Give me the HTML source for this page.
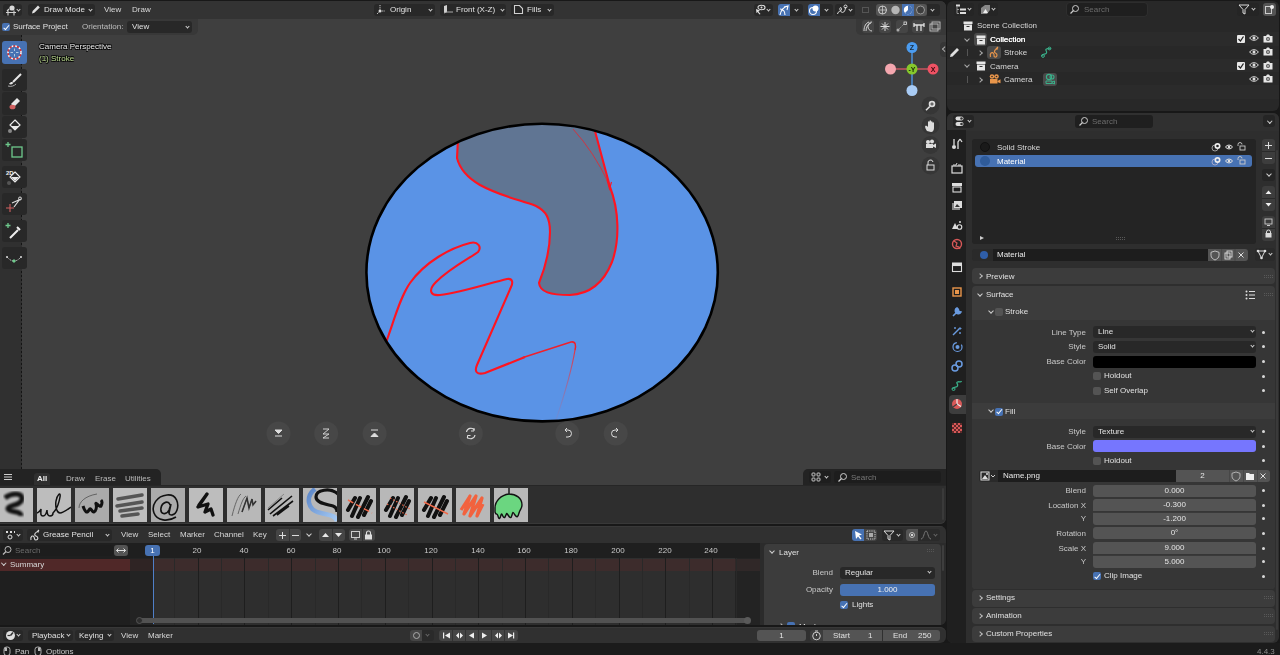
<!DOCTYPE html>
<html><head><meta charset="utf-8">
<style>
*{box-sizing:border-box;margin:0;padding:0}
html,body{width:1280px;height:655px;overflow:hidden;-webkit-font-smoothing:antialiased;background:#181818;font-family:"Liberation Sans",sans-serif;font-size:8px;color:#dcdcdc}
.a{position:absolute}
.t{position:absolute;white-space:nowrap;will-change:transform;line-height:10px;height:10px}
.dd{position:absolute;background:#282828;border-radius:3px}
.chev{position:absolute;width:4px;height:4px;border-right:1px solid #cfcfcf;border-bottom:1px solid #cfcfcf;transform:rotate(45deg)}
.chr{position:absolute;width:4px;height:4px;border-right:1px solid #bdbdbd;border-bottom:1px solid #bdbdbd;transform:rotate(-45deg)}
.tb{position:absolute;left:2px;width:25px;background:#282828;border-radius:3px}
.fld{position:absolute;will-change:transform;background:#545454;border-radius:3px;color:#e6e6e6;text-align:center;line-height:11px;height:11px}
.sel{position:absolute;will-change:transform;background:#282828;border-radius:3px;color:#e0e0e0;line-height:11px;height:11px;padding-left:5px}
.lbl{position:absolute;text-align:right;will-change:transform;white-space:nowrap;color:#c8c8c8;line-height:11px;height:11px}
.dot{position:absolute;width:3px;height:3px;border-radius:50%;background:#d8d8d8}
.cb{position:absolute;width:8px;height:8px;border-radius:2px;background:#545454}
.cbon{position:absolute;width:8px;height:8px;border-radius:2px;background:#4772b3}
.cbon:after{content:"";position:absolute;left:2.5px;top:0.5px;width:2px;height:4.5px;border-right:1.3px solid #fff;border-bottom:1.3px solid #fff;transform:rotate(40deg)}
.ph{position:absolute;background:#3c3c3c;border-radius:4px}
</style></head><body>

<!-- ================= VIEWPORT ================= -->
<div class="a" style="left:0;top:1px;width:946px;height:484px;background:#3f3f3f;border-radius:0 6px 0 0;overflow:hidden" id="vp">
  <!-- header -->
  <div class="a" style="left:0;top:0;width:946px;height:18px;background:#333333"></div>
  <!-- tool settings -->
  <div class="a" style="left:0;top:18px;width:198px;height:16px;background:#383838;border-radius:0 0 5px 0"></div>
  <div class="a" style="left:856px;top:18px;width:90px;height:16px;background:#383838;border-radius:0 0 0 5px"></div>
  <!-- toolbar -->
  <div class="a" style="left:0;top:34px;width:22px;height:434px;background:#303030"></div>
  <div class="a" style="left:21px;top:34px;width:1px;height:434px;background:repeating-linear-gradient(#141414 0 2px,transparent 2px 4px)"></div>

  <!-- header buttons -->
  <div class="dd" style="left:3px;top:3px;width:19px;height:12px"></div>
  <svg class="a" style="left:5px;top:3px" width="12" height="12" viewBox="0 0 12 12"><circle cx="7" cy="4" r="2.6" fill="#d8d8d8"/><path d="M1 8.5h10M3 6.5v5M9 6.5v5M2 7l2-2" stroke="#d0d0d0" stroke-width="1.1" fill="none"/></svg>
  <div class="chev" style="left:16.5px;top:7px;width:3px;height:3px"></div>
  <div class="dd" style="left:28px;top:3px;width:67px;height:12px"></div>
  <svg class="a" style="left:30px;top:3px" width="11" height="11" viewBox="0 0 11 11"><path d="M2 9.5 L2.6 7 L8 1.6 L9.8 3.4 L4.4 8.8 Z" fill="#e0e0e0"/></svg>
  <div class="t" style="left:44px;top:4px;color:#e2e2e2">Draw Mode</div>
  <div class="chev" style="left:89px;top:7px;width:3px;height:3px"></div>
  <div class="t" style="left:104px;top:4px;color:#d8d8d8">View</div>
  <div class="t" style="left:132px;top:4px;color:#d8d8d8">Draw</div>

  <div class="dd" style="left:374px;top:3px;width:61px;height:12px"></div>
  <svg class="a" style="left:376px;top:3px" width="11" height="11" viewBox="0 0 11 11"><path d="M4 1v6M1 10l3-3M4 7h5" stroke="#cfcfcf" stroke-width="1" fill="none" stroke-dasharray="1.2 1"/><circle cx="4" cy="7" r="1.5" fill="#e0e0e0"/></svg>
  <div class="t" style="left:390px;top:4px;color:#e2e2e2">Origin</div>
  <div class="chev" style="left:429px;top:7px;width:3px;height:3px"></div>
  <div class="dd" style="left:440px;top:3px;width:66px;height:12px"></div>
  <svg class="a" style="left:442px;top:3px" width="12" height="11" viewBox="0 0 12 11"><path d="M2 2l3-1v7l-3 1z" fill="#cfcfcf"/><path d="M5 8h6M2 9l3-1" stroke="#aaa" stroke-width="1"/></svg>
  <div class="t" style="left:456px;top:4px;color:#e2e2e2">Front (X-Z)</div>
  <div class="chev" style="left:501px;top:7px;width:3px;height:3px"></div>
  <div class="dd" style="left:511px;top:3px;width:43px;height:12px"></div>
  <svg class="a" style="left:513px;top:3px" width="11" height="11" viewBox="0 0 11 11"><path d="M1.5 1.5h5l3 3v5h-8z" fill="none" stroke="#d0d0d0" stroke-width="1.1"/></svg>
  <div class="t" style="left:527px;top:4px;color:#e2e2e2">Fills</div>
  <div class="chev" style="left:548px;top:7px;width:3px;height:3px"></div>

  <div class="dd" style="left:754px;top:3px;width:19px;height:12px"></div>
  <svg class="a" style="left:755px;top:3px" width="11" height="11" viewBox="0 0 11 11"><ellipse cx="6.5" cy="3.5" rx="3.5" ry="2.2" fill="none" stroke="#ddd" stroke-width="1.1"/><circle cx="6.5" cy="3.5" r="1" fill="#ddd"/><path d="M1 5l4 1.5-1.5 1 2 2.5-1 .5-2-2.5-1 1.2z" fill="#ddd"/></svg>
  <div class="chev" style="left:767px;top:7px;width:3px;height:3px"></div>
  <div class="a" style="left:778px;top:3px;width:12px;height:12px;background:#4772b3;border-radius:3px 0 0 3px"></div>
  <svg class="a" style="left:778px;top:3px" width="12" height="12" viewBox="0 0 12 12"><path d="M2 11C3 6 5 3 10 2M6 3l4-1-1 4M2 5c3 0 5 2 5 6" stroke="#fff" stroke-width="1.1" fill="none"/></svg>
  <div class="dd" style="left:790px;top:3px;width:13px;height:12px;border-radius:0 3px 3px 0"></div>
  <div class="chev" style="left:795px;top:7px;width:3px;height:3px"></div>
  <div class="a" style="left:808px;top:3px;width:12px;height:12px;background:#4772b3;border-radius:3px 0 0 3px"></div>
  <svg class="a" style="left:808px;top:3px" width="12" height="12" viewBox="0 0 12 12"><circle cx="5" cy="7" r="3.5" fill="none" stroke="#fff" stroke-width="1.1"/><circle cx="7.5" cy="4.5" r="3" fill="#fff"/></svg>
  <div class="dd" style="left:820px;top:3px;width:13px;height:12px;border-radius:0 3px 3px 0"></div>
  <div class="chev" style="left:825px;top:7px;width:3px;height:3px"></div>
  <div class="dd" style="left:835px;top:3px;width:20px;height:12px"></div>
  <svg class="a" style="left:836px;top:3px" width="12" height="12" viewBox="0 0 12 12"><path d="M1.5 10c0-3 4-2 4-5s-3-1-1 2 5 1 5-4" stroke="#ddd" stroke-width="1" fill="none"/><circle cx="9.5" cy="2.5" r="1.5" fill="none" stroke="#ddd"/></svg>
  <div class="chev" style="left:849px;top:7px;width:3px;height:3px"></div>
  <div class="a" style="left:859px;top:3px;width:13px;height:12px;background:#333;border-radius:3px"></div>
  <div class="a" style="left:862px;top:6px;width:7px;height:6px;border:1px solid #555"></div>
  <div class="a" style="left:876px;top:3px;width:51px;height:12px;background:#545454;border-radius:3px"></div>
  <div class="a" style="left:902px;top:3px;width:12px;height:12px;background:#4772b3"></div>
  <div class="dd" style="left:927px;top:3px;width:13px;height:12px;border-radius:0 3px 3px 0"></div>
  <div class="chev" style="left:931px;top:7px;width:3px;height:3px"></div>
  <svg class="a" style="left:876px;top:3px" width="51" height="12" viewBox="0 0 51 12">
    <circle cx="6.5" cy="6" r="4" fill="none" stroke="#ccc" stroke-width="1"/><path d="M2.5 6h8M6.5 2v8" stroke="#ccc" stroke-width=".8"/>
    <circle cx="19.5" cy="6" r="4.2" fill="#b5b5b5"/>
    <circle cx="32" cy="6" r="4.2" fill="#fff"/><path d="M32 6V1.8A4.2 4.2 0 0 1 36.2 6z" fill="#4772b3"/><path d="M32 6h4.2A4.2 4.2 0 0 1 29 9z" fill="#4772b3"/>
    <circle cx="44.5" cy="6" r="4" fill="#3e3e3e" stroke="#999" stroke-width="1"/>
  </svg>

  <!-- tool settings row -->
  <div class="cbon" style="left:2px;top:22px"></div>
  <div class="t" style="left:13px;top:21px;color:#e0e0e0">Surface Project</div>
  <div class="t" style="left:82px;top:21px;color:#bdbdbd">Orientation:</div>
  <div class="dd" style="left:127px;top:20px;width:65px;height:12px"></div>
  <div class="t" style="left:132px;top:21px;color:#e0e0e0">View</div>
  <div class="chev" style="left:186px;top:24px;width:3px;height:3px"></div>

  <!-- right second row icons -->
  <div class="a" style="left:862px;top:19px;width:12px;height:13px;background:#454545;border-radius:3px"></div>
  <div class="a" style="left:879px;top:19px;width:12px;height:13px;background:#454545;border-radius:3px"></div>
  <div class="a" style="left:896px;top:19px;width:12px;height:13px;background:#454545;border-radius:3px"></div>
  <div class="a" style="left:912px;top:19px;width:12px;height:13px;background:#454545;border-radius:3px"></div>
  <div class="a" style="left:929px;top:19px;width:12px;height:13px;background:#454545;border-radius:3px"></div>
  <svg class="a" style="left:862px;top:19px" width="80" height="13" viewBox="0 0 80 13">
    <path d="M2 11C2 6 4 3 7 2M4 11C4 7 6 4 9 3M10 2a4 4.5 0 0 0 0 9" stroke="#d5d5d5" stroke-width="1" fill="none"/>
    <path d="M23 2v9M18.5 6.5h9M20 3.5l6 6M26 3.5l-6 6" stroke="#ddd" stroke-width="1"/>
    <circle cx="36" cy="10" r="1.5" fill="#aaa"/><path d="M37 9l5-5" stroke="#aaa" stroke-dasharray="1 1"/><rect x="42" y="2" width="2.5" height="2.5" fill="none" stroke="#ddd" stroke-width=".8"/>
    <path d="M52 3v4M62 3v4M52 5h10M55 5v6M59 5v6" stroke="#ddd" stroke-width="1.3"/>
    <rect x="68" y="4" width="8" height="7" fill="none" stroke="#ccc" stroke-width=".8"/><rect x="70" y="2" width="8" height="7" fill="none" stroke="#ccc" stroke-width=".8"/>
  </svg>

  <!-- toolbar -->
  <div class="tb" style="top:40px;height:23px;background:#4772b3"></div>
  <svg class="a" style="left:6px;top:43px" width="17" height="17" viewBox="0 0 17 17"><circle cx="8.5" cy="8.5" r="6.5" fill="none" stroke="#fff" stroke-width="1.5" stroke-dasharray="2.2 1.6"/><circle cx="8.5" cy="8.5" r="6.5" fill="none" stroke="#d33" stroke-width="1.5" stroke-dasharray="2.2 1.6" stroke-dashoffset="1.9"/><path d="M8.5 4.5v2.5M8.5 10v2.5M4.5 8.5h2.5M10 8.5h2.5" stroke="#cde" stroke-width=".8"/></svg>
  <div class="tb" style="top:68px;height:22px"></div>
  <svg class="a" style="left:6px;top:71px" width="17" height="17" viewBox="0 0 17 17"><path d="M15 2L7 10" stroke="#e8e8e8" stroke-width="2"/><path d="M3 12c2-3 4-2 4-1s-2 2-4 1z" fill="#e8e8e8"/><path d="M2 14c3 1 6 0 8-2" stroke="#aaa" fill="none"/></svg>
  <div class="tb" style="top:91px;height:23px"></div>
  <svg class="a" style="left:6px;top:94px" width="17" height="17" viewBox="0 0 17 17"><path d="M5 9l6-6 3 3-6 6z" fill="#e8e8e8"/><ellipse cx="6.5" cy="12" rx="3" ry="2.3" fill="#d06060"/></svg>
  <div class="tb" style="top:115px;height:22px"></div>
  <svg class="a" style="left:6px;top:117px" width="17" height="17" viewBox="0 0 17 17"><path d="M9 2l5 5-5 5-5-5z" fill="none" stroke="#e8e8e8" stroke-width="1.2"/><path d="M5 8h8l-4 4z" fill="#e8e8e8"/><circle cx="4" cy="13" r="2" fill="#888"/></svg>
  <div class="tb" style="top:138px;height:22px"></div>
  <svg class="a" style="left:5px;top:140px" width="20" height="19" viewBox="0 0 20 19"><path d="M3 1v5M0.5 3.5h5" stroke="#6ec98c" stroke-width="1.3"/><rect x="7" y="6" width="10" height="10" fill="none" stroke="#6ec98c" stroke-width="1.3"/></svg>
  <div class="tb" style="top:165px;height:22px"></div>
  <svg class="a" style="left:5px;top:167px" width="18" height="18" viewBox="0 0 18 18"><text x="1" y="7" font-size="6" font-weight="bold" fill="#eee" font-family="Liberation Sans">2D</text><path d="M10 4l5 5-5 5-5-5z" fill="none" stroke="#e8e8e8" stroke-width="1.1"/><path d="M6 9h8l-4 4z" fill="#e8e8e8"/><circle cx="4" cy="15" r="2" fill="#555"/></svg>
  <div class="tb" style="top:192px;height:22px"></div>
  <svg class="a" style="left:5px;top:194px" width="18" height="18" viewBox="0 0 18 18"><path d="M7 8l9-4M9 12l6-8" stroke="#ddd" stroke-width="1.2"/><circle cx="15" cy="3.5" r="1.5" fill="none" stroke="#ddd"/><path d="M5 9v8M1 13h8" stroke="#d06060" stroke-width="1.1"/></svg>
  <div class="tb" style="top:219px;height:22px"></div>
  <svg class="a" style="left:5px;top:221px" width="18" height="18" viewBox="0 0 18 18"><path d="M3 1v5M0.5 3.5h5" stroke="#6ec98c" stroke-width="1.3"/><path d="M5 16l8-8M12 5l3 3" stroke="#eee" stroke-width="2"/></svg>
  <div class="tb" style="top:246px;height:22px"></div>
  <svg class="a" style="left:5px;top:248px" width="18" height="18" viewBox="0 0 18 18"><path d="M2 8q7 8 14 0" stroke="#ddd" stroke-width=".9" fill="none" stroke-dasharray="1.2 .8"/><circle cx="2" cy="8" r="1" fill="#ddd"/><circle cx="16" cy="8" r="1" fill="#ddd"/><path d="M9 10l2 2-2 2-2-2z" fill="#6ec98c"/></svg>

  <!-- overlay text -->
  <div class="t" style="left:39px;top:41px;color:#e8e8e8;text-shadow:0.7px 0.7px 0 #000,-0.7px -0.7px 0 #000,0.7px -0.7px 0 #000,-0.7px 0.7px 0 #000">Camera Perspective</div>
  <div class="t" style="left:39px;top:53px;color:#b7d789;text-shadow:0.7px 0.7px 0 #000,-0.7px -0.7px 0 #000,0.7px -0.7px 0 #000,-0.7px 0.7px 0 #000">(1) Stroke</div>

  <!-- drawing -->
  <svg class="a" style="left:0;top:-1px" width="946" height="469" viewBox="0 0 946 469">
    <defs><linearGradient id="tg" gradientUnits="userSpaceOnUse" x1="0" y1="348" x2="0" y2="418"><stop offset="0" stop-color="#e8303a"/><stop offset="1" stop-color="#8a7fb8" stop-opacity=".3"/></linearGradient><clipPath id="ec"><ellipse cx="542.1" cy="272.6" rx="175.7" ry="148.8"/></clipPath></defs>
    <ellipse cx="542.1" cy="272.6" rx="175.7" ry="148.8" fill="#5a93e6"/>
    <g clip-path="url(#ec)">
      <path d="M459 120 L457 158 C460 170 468 178 480 185 C500 196 520 200 536 206 C546 211 550 218 550 232 C550 250 545 268 539 283 C540 292 550 295 570 295 C590 294 604 282 612 262 C620 240 619 210 610 187 L592 120 Z" fill="#607593"/>
      <path d="M459 120 L457 158 C460 170 468 178 480 185 C500 196 520 200 536 206 C546 211 550 218 550 232 C550 250 545 268 539 283 C540 292 550 295 570 295 C590 294 604 282 612 262 C620 240 619 210 610 187 L592 120" fill="none" stroke="#ff1420" stroke-width="2.1"/>
      <path d="M573 129 Q594 152 609 184" stroke="#e8262e" stroke-width=".8" fill="none"/><path d="M607 180 L609.5 189 L611.5 182" stroke="#ff1420" stroke-width="1.1" fill="none"/>
      <path d="M380 358 C392 330 398 300 410 283 C425 262 450 248 470 243 C478 241 482 247 478 252 C470 258 450 268 436 282 C428 290 430 296 440 295 C460 293 490 283 507 279 C513 278 513 283 511 287 L477 365 C474 372 477 375 485 373 L525 357" fill="none" stroke="#ff1420" stroke-width="2.1"/>
      <path d="M523 357.5 L571 342 C576 341 576 346 575 350" fill="none" stroke="#f0202a" stroke-width="1.5"/>
      <path d="M575 350 C572 368 566 390 556 420" fill="none" stroke="url(#tg)" stroke-width="1.2"/>
    </g>
    <ellipse cx="542.1" cy="272.6" rx="175.7" ry="148.8" fill="none" stroke="#000" stroke-width="2.6"/>
  </svg>

  <div class="a" style="left:940px;top:41px;width:8px;height:15px;background:#363636;border-radius:4px 0 0 4px"></div>
  <div class="a" style="left:943px;top:46px;width:3.5px;height:3.5px;border-left:1px solid #aaa;border-bottom:1px solid #aaa;transform:rotate(45deg)"></div>
  <!-- gizmo -->
  <svg class="a" style="left:880px;top:34px" width="64" height="64" viewBox="880 35 64 64">
    <path d="M890 69H934" stroke="#c9565f" stroke-width="1.5"/>
    <path d="M912 47V91" stroke="#4b90d8" stroke-width="1.5"/>
    <circle cx="890.5" cy="69" r="5.5" fill="#f4a7af"/>
    <circle cx="912" cy="90.5" r="5.5" fill="#a9ccf5"/>
    <circle cx="912" cy="47.5" r="5.5" fill="#4b9cf0"/>
    <circle cx="933" cy="69" r="5.5" fill="#f05264"/>
    <circle cx="912" cy="69" r="5.5" fill="#86c92b"/>
    <text x="912" y="50.3" font-size="7" text-anchor="middle" fill="#1a2a3a" font-family="Liberation Sans" font-weight="bold">Z</text>
    <text x="933" y="71.8" font-size="7" text-anchor="middle" fill="#3a0a10" font-family="Liberation Sans" font-weight="bold">X</text>
    <text x="912" y="71.8" font-size="7" text-anchor="middle" fill="#1a2a0a" font-family="Liberation Sans" font-weight="bold">-Y</text>
  </svg>
  <!-- nav buttons -->
  <svg class="a" style="left:920px;top:94px" width="22" height="84" viewBox="920 95 22 84">
    <circle cx="930.5" cy="105.5" r="9" fill="#363636"/>
    <circle cx="930.5" cy="125.5" r="9" fill="#363636"/>
    <circle cx="930.5" cy="145" r="9" fill="#363636"/>
    <circle cx="930.5" cy="165.5" r="9" fill="#363636"/>
    <circle cx="932" cy="104" r="3.3" fill="#ddd"/><path d="M932 102.3v3.4M930.3 104h3.4" stroke="#363636" stroke-width=".9"/><path d="M929.8 106.5l-3.8 3.8" stroke="#ddd" stroke-width="1.6"/>
    <path d="M927 131c-2-3-3-6 0-5l1 1v-5c0-1 1.5-1 1.5 0v3-4c0-1 1.5-1 1.5 0v4-3c0-1 1.5-1 1.5 0v3-2c0-1 1.5-1 1.5 0v5c0 2-1 4-3 4z" fill="#ddd"/>
    <circle cx="928" cy="142" r="2" fill="#ddd"/><circle cx="932" cy="141.5" r="2" fill="#ddd"/><rect x="926" y="144" width="7" height="4" fill="#ddd"/><path d="M933 145l3-1.5v4.5l-3-1.5z" fill="#ddd"/>
    <rect x="927" y="165" width="7" height="5" fill="none" stroke="#ddd" stroke-width="1"/><path d="M928 165v-2a2.5 2.5 0 0 1 5 -1" stroke="#ddd" fill="none"/>
  </svg>
  <!-- bottom floating buttons -->
  <svg class="a" style="left:260px;top:419px" width="380" height="30" viewBox="260 420 380 30">
    <g fill="#474747"><circle cx="278.5" cy="433.4" r="12"/><circle cx="326.2" cy="433.4" r="12"/><circle cx="374.6" cy="433.4" r="12"/><circle cx="470.8" cy="433.4" r="12"/><circle cx="567.3" cy="433.4" r="12"/><circle cx="615.7" cy="433.4" r="12"/></g>
    <path d="M275 430h7l-3.5 3.5z M275 436h7" stroke="#ddd" fill="#ddd" stroke-width="1"/>
    <path d="M323 429h6l-6 5 6 0-6 4h6" stroke="#ddd" fill="none" stroke-width=".9"/>
    <path d="M371 430h7M374.5 433l3.5 3.5h-7z" stroke="#ddd" fill="#ddd" stroke-width="1"/>
    <path d="M466.5 432a4.5 4.5 0 0 1 8 -2M475 435a4.5 4.5 0 0 1 -8 2" stroke="#ddd" fill="none" stroke-width="1.1"/><path d="M474 428v3h-3M467.5 438.5v-3h3" stroke="#ddd" fill="none"/>
    <path d="M565 430h3a3.5 3.5 0 0 1 0 7h-2M565 430l2-2M565 430l2 2" stroke="#ddd" fill="none" stroke-width="1"/>
    <path d="M618 430h-3a3.5 3.5 0 0 0 0 7h2M618 430l-2-2M618 430l-2 2" stroke="#ddd" fill="none" stroke-width="1"/>
  </svg>
</div>


<!-- ================= ASSET SHELF ================= -->
<div class="a" style="left:0;top:469px;width:161px;height:16px;background:#232323;border-radius:0 5px 0 0"></div>
<div class="a" style="left:4px;top:474px;width:8px;height:1px;background:#cfcfcf;box-shadow:0 2.5px 0 #cfcfcf,0 5px 0 #cfcfcf"></div>
<div class="a" style="left:34px;top:473px;width:16px;height:12px;background:#2f2f2f;border-radius:3px 3px 0 0"></div>
<div class="t" style="left:37px;top:474px;color:#f0f0f0;font-weight:bold">All</div>
<div class="t" style="left:66px;top:474px;color:#bbb">Draw</div>
<div class="t" style="left:95px;top:474px;color:#bbb">Erase</div>
<div class="t" style="left:125px;top:474px;color:#bbb">Utilities</div>
<div class="a" style="left:803px;top:469px;width:143px;height:16px;background:#232323;border-radius:5px 0 0 0"></div>
<div class="dd" style="left:809px;top:471px;width:22px;height:12px;background:#1e1e1e"></div>
<svg class="a" style="left:811px;top:472px" width="11" height="10" viewBox="0 0 11 10"><g fill="none" stroke="#ddd" stroke-width=".9"><rect x="1" y="1" width="3" height="3" rx=".8"/><rect x="6" y="1" width="3" height="3" rx=".8"/><rect x="1" y="6" width="3" height="3" rx=".8"/><rect x="6" y="6" width="3" height="3" rx=".8"/></g></svg>
<div class="chev" style="left:825px;top:475px;width:3px;height:3px"></div>
<div class="dd" style="left:834px;top:471px;width:107px;height:12px;background:#1d1d1d"></div>
<svg class="a" style="left:837px;top:472px" width="11" height="11" viewBox="0 0 11 11"><circle cx="6.5" cy="4.5" r="3" fill="none" stroke="#ccc" stroke-width="1"/><path d="M4.5 6.5L1.5 9.5" stroke="#ccc" stroke-width="1.2"/></svg>
<div class="t" style="left:851px;top:473px;color:#777">Search</div>
<div class="a" style="left:0;top:485px;width:946px;height:38.5px;background:#2e2e2e;border-top:1px solid #262626;border-radius:0 0 6px 0;box-shadow:inset 0 -1px 0 #383838"></div>
<div class="a" style="left:942px;top:488px;width:2px;height:32px;background:#3a3a3a;border-radius:1px"></div>
<svg width="0" height="0" style="position:absolute"><defs><filter id="bl"><feGaussianBlur stdDeviation="1.1"/></filter></defs></svg>
<svg class="a" style="left:-1px;top:488px" width="34" height="34" viewBox="0 0 34 34"><rect width="34" height="34" fill="#bdbdbd"/><path d="M6 10c6-5 18-6 17 1s-15 6-14 10 13 1 13 7" stroke="#000" stroke-width="5" fill="none" opacity=".9" filter="url(#bl)"/></svg>
<svg class="a" style="left:37px;top:488px" width="34" height="34" viewBox="0 0 34 34"><rect width="34" height="34" fill="#bdbdbd"/><path d="M0 25c3-1 3-2 4-4 0 4-1 7 2 7s4-6 4-6c0 3 0 6 3 6s3-3 3-3c3-3 6-10 7-16s-3-2-4 4 1 12 4 12 8-4 11-6" stroke="#111" stroke-width="1.5" fill="none"/></svg>
<svg class="a" style="left:75px;top:488px" width="34" height="34" viewBox="0 0 34 34"><rect width="34" height="34" fill="#ababab"/><path d="M4 20c0-6 6-12 18-14" stroke="#333" stroke-width=".6" fill="none"/><path d="M8 18c2 6 4 8 6 4s3 3 5 2 3-5 2-8 4 4 5 2 2-4 0-6" stroke="#111" stroke-width="3" fill="none"/></svg>
<svg class="a" style="left:113px;top:488px" width="34" height="34" viewBox="0 0 34 34"><rect width="34" height="34" fill="#bdbdbd"/><path d="M5 11l24-4M4 18l25-4M7 23l22-3M9 28l16-2" stroke="#555" stroke-width="3.5" stroke-linecap="round" fill="none"/></svg>
<svg class="a" style="left:151px;top:488px" width="34" height="34" viewBox="0 0 34 34"><rect width="34" height="34" fill="#ababab"/><path d="M19 17c-1-5-8-3-9 3s5 8 8 2l2-6-2 9c0 3 6 3 8-3s0-16-10-15-16 10-13 18 14 9 22 4" stroke="#111" stroke-width="1.6" fill="none"/></svg>
<svg class="a" style="left:189px;top:488px" width="34" height="34" viewBox="0 0 34 34"><rect width="34" height="34" fill="#bdbdbd"/><path d="M10 17l8-11-9 13 10-3-3 8 6-3 2 6" stroke="#111" stroke-width="3.3" stroke-linejoin="round" stroke-linecap="round" fill="none"/></svg>
<svg class="a" style="left:227px;top:488px" width="34" height="34" viewBox="0 0 34 34"><rect width="34" height="34" fill="#b8b8b8"/><path d="M5 28c3-12 6-20 9-22M11 26c3-10 5-16 8-18M15 24l5-14 2 10 3-9 1 6 3-4" stroke="#666" stroke-width="1" fill="none"/><path d="M15 24l5-14 2 10 3-9 1 6 3-4" stroke="#333" stroke-width="1.5" fill="none"/></svg>
<svg class="a" style="left:265px;top:488px" width="34" height="34" viewBox="0 0 34 34"><rect width="34" height="34" fill="#b8b8b8"/><path d="M3 22l14-12M5 26l22-18M8 28l20-15M12 27l12-9" stroke="#111" stroke-width="1.6" fill="none"/><path d="M3 20l16-14" stroke="#888" stroke-width="1" fill="none"/></svg>
<svg class="a" style="left:303px;top:488px" width="34" height="34" viewBox="0 0 34 34"><rect width="34" height="34" fill="#b8b8b8"/><defs><linearGradient id="bg9" x1="0" y1="0" x2="1" y2="1"><stop offset="0" stop-color="#5b86c8"/><stop offset="1" stop-color="#a8ccf5"/></linearGradient></defs><path d="M12 1C3 8 3 22 18 25c8 2 14 2 16 8" stroke="url(#bg9)" stroke-width="4.5" fill="none"/><path d="M35 6C27-1 13 2 13 9c0 6 10 7 17 9 3 1 4 3 4 6" stroke="#111" stroke-width="3.2" fill="none"/></svg>
<svg class="a" style="left:342px;top:488px" width="34" height="34" viewBox="0 0 34 34"><rect width="34" height="34" fill="#b8b8b8"/><path d="M10 28l8-18M16 29l10-20M22 27l7-14M6 22l7-12" stroke="#111" stroke-width="4" stroke-linecap="round"/><path d="M6 12l24 13" stroke="#f06a4a" stroke-width="1.5" stroke-dasharray="6 3"/></svg>
<svg class="a" style="left:380px;top:488px" width="34" height="34" viewBox="0 0 34 34"><rect width="34" height="34" fill="#b8b8b8"/><path d="M10 28l8-18M16 29l10-20M22 27l7-14M6 22l7-12" stroke="#111" stroke-width="4" stroke-linecap="round"/><path d="M7 16l20 11M10 10l20 11" stroke="#f06a4a" stroke-width="1.2" stroke-dasharray="1.5 2"/></svg>
<svg class="a" style="left:418px;top:488px" width="34" height="34" viewBox="0 0 34 34"><rect width="34" height="34" fill="#b8b8b8"/><path d="M10 28l8-18M16 29l10-20M22 27l7-14M6 22l7-12" stroke="#111" stroke-width="4" stroke-linecap="round"/><path d="M6 14l24 12" stroke="#f06a4a" stroke-width="1.5"/></svg>
<svg class="a" style="left:456px;top:488px" width="34" height="34" viewBox="0 0 34 34"><rect width="34" height="34" fill="#b8b8b8"/><path d="M5 22l9-14-6 18 12-18-6 20 12-18-5 18 6-12" stroke="#f2623e" stroke-width="3.2" stroke-linejoin="round" fill="none"/></svg>
<svg class="a" style="left:494px;top:488px" width="34" height="34" viewBox="0 0 34 34"><rect width="34" height="34" fill="#b8b8b8"/><path d="M15 0v6c-8 1-14 7-14 14v4c1 4 2 0 3 4s2 3 3-1 2 5 4 2 1-5 3-2 3 4 4 0 1-3 3 0 3 2 4-2 3-4 3-8c0-7-6-11-13-11V0" fill="#6bd680" stroke="#111" stroke-width="1.4"/></svg>

<!-- ================= DOPESHEET ================= -->
<div class="a" style="left:0;top:526px;width:946px;height:99px;background:#2b2b2b;border-radius:0 6px 6px 0;overflow:hidden">
  <div class="a" style="left:0;top:0;width:946px;height:17px;background:#303030;box-shadow:inset 0 1px 0 #383838"></div>
  <div class="a" style="left:0;top:17px;width:130px;height:83px;background:#1f1f1f"></div>
  <div class="a" style="left:130px;top:17px;width:630px;height:15px;background:#1f1f1f"></div>
  <div class="a" style="left:130px;top:32px;width:630px;height:68px;background:#2e2e2e"></div>
  <div class="a" style="left:130px;top:32px;width:23px;height:68px;background:#232323"></div>
  <div class="a" style="left:735px;top:32px;width:25px;height:68px;background:#232323"></div>
  <div class="a" style="left:0;top:33px;width:130px;height:12px;background:#502828"></div>
  <div class="a" style="left:130px;top:33px;width:605px;height:12px;background:#3d2c2c"></div>
  <div class="a" style="left:130px;top:33px;width:23px;height:12px;background:#2f2424"></div>
  <div class="a" style="left:735px;top:33px;width:25px;height:12px;background:#302828"></div>
  <div class="a" style="left:174px;top:32px;width:1px;height:68px;background:#292929"></div>
  <div class="a" style="left:198px;top:32px;width:1px;height:68px;background:#1e1e1e"></div>
  <div class="a" style="left:221px;top:32px;width:1px;height:68px;background:#292929"></div>
  <div class="a" style="left:244px;top:32px;width:1px;height:68px;background:#1e1e1e"></div>
  <div class="a" style="left:268px;top:32px;width:1px;height:68px;background:#292929"></div>
  <div class="a" style="left:291px;top:32px;width:1px;height:68px;background:#1e1e1e"></div>
  <div class="a" style="left:315px;top:32px;width:1px;height:68px;background:#292929"></div>
  <div class="a" style="left:338px;top:32px;width:1px;height:68px;background:#1e1e1e"></div>
  <div class="a" style="left:361px;top:32px;width:1px;height:68px;background:#292929"></div>
  <div class="a" style="left:385px;top:32px;width:1px;height:68px;background:#1e1e1e"></div>
  <div class="a" style="left:408px;top:32px;width:1px;height:68px;background:#292929"></div>
  <div class="a" style="left:432px;top:32px;width:1px;height:68px;background:#1e1e1e"></div>
  <div class="a" style="left:455px;top:32px;width:1px;height:68px;background:#292929"></div>
  <div class="a" style="left:478px;top:32px;width:1px;height:68px;background:#1e1e1e"></div>
  <div class="a" style="left:502px;top:32px;width:1px;height:68px;background:#292929"></div>
  <div class="a" style="left:525px;top:32px;width:1px;height:68px;background:#1e1e1e"></div>
  <div class="a" style="left:548px;top:32px;width:1px;height:68px;background:#292929"></div>
  <div class="a" style="left:572px;top:32px;width:1px;height:68px;background:#1e1e1e"></div>
  <div class="a" style="left:595px;top:32px;width:1px;height:68px;background:#292929"></div>
  <div class="a" style="left:619px;top:32px;width:1px;height:68px;background:#1e1e1e"></div>
  <div class="a" style="left:642px;top:32px;width:1px;height:68px;background:#292929"></div>
  <div class="a" style="left:665px;top:32px;width:1px;height:68px;background:#1e1e1e"></div>
  <div class="a" style="left:689px;top:32px;width:1px;height:68px;background:#292929"></div>
  <div class="a" style="left:712px;top:32px;width:1px;height:68px;background:#1e1e1e"></div>
  <div class="a" style="left:736px;top:32px;width:1px;height:68px;background:#292929"></div>
  <div class="t" style="left:182.2px;top:20px;width:30px;text-align:center;color:#c8c8c8">20</div>
  <div class="t" style="left:228.9px;top:20px;width:30px;text-align:center;color:#c8c8c8">40</div>
  <div class="t" style="left:275.7px;top:20px;width:30px;text-align:center;color:#c8c8c8">60</div>
  <div class="t" style="left:322.4px;top:20px;width:30px;text-align:center;color:#c8c8c8">80</div>
  <div class="t" style="left:369.2px;top:20px;width:30px;text-align:center;color:#c8c8c8">100</div>
  <div class="t" style="left:415.9px;top:20px;width:30px;text-align:center;color:#c8c8c8">120</div>
  <div class="t" style="left:462.7px;top:20px;width:30px;text-align:center;color:#c8c8c8">140</div>
  <div class="t" style="left:509.4px;top:20px;width:30px;text-align:center;color:#c8c8c8">160</div>
  <div class="t" style="left:556.2px;top:20px;width:30px;text-align:center;color:#c8c8c8">180</div>
  <div class="t" style="left:602.9px;top:20px;width:30px;text-align:center;color:#c8c8c8">200</div>
  <div class="t" style="left:649.7px;top:20px;width:30px;text-align:center;color:#c8c8c8">220</div>
  <div class="t" style="left:696.4px;top:20px;width:30px;text-align:center;color:#c8c8c8">240</div>
  <div class="a" style="left:145px;top:19px;width:15px;height:11px;background:#4772b3;border-radius:3px"></div>
  <div class="t" style="left:145px;top:19.5px;width:15px;text-align:center;color:#fff">1</div>
  <div class="a" style="left:152.5px;top:30px;width:1.2px;height:68px;background:#4f7fc8"></div>
  <div class="a" style="left:137px;top:92px;width:612px;height:5px;background:#525252;border-radius:2.5px"></div>
  <div class="a" style="left:136px;top:91px;width:7px;height:7px;border-radius:50%;background:#2e2e2e;border:1px solid #555"></div>
  <div class="a" style="left:744px;top:91px;width:7px;height:7px;border-radius:50%;background:#5a5a5a"></div>
  <!-- header -->
  <div class="dd" style="left:3px;top:3px;width:20px;height:12px"></div>
  <svg class="a" style="left:4px;top:3px" width="13" height="12" viewBox="0 0 13 12"><path d="M2 3h2M6 3h2M10 3h1" stroke="#ddd" stroke-width="2"/><circle cx="6" cy="8" r="2" fill="none" stroke="#ddd"/></svg>
  <div class="chev" style="left:17px;top:7px;width:3px;height:3px"></div>
  <div class="dd" style="left:27px;top:3px;width:85px;height:12px"></div>
  <svg class="a" style="left:29px;top:3px" width="12" height="12" viewBox="0 0 12 12"><path d="M2 11C1 7 4 6 5 8s0 3 2 3 3-3 0-4 0-5 3-4M8 3l2-2" stroke="#ddd" stroke-width="1.1" fill="none"/></svg>
  <div class="t" style="left:43px;top:4px;color:#e0e0e0">Grease Pencil</div>
  <div class="chev" style="left:106px;top:7px;width:3px;height:3px"></div>
  <div class="t" style="left:121px;top:4px;color:#d8d8d8">View</div>
  <div class="t" style="left:148px;top:4px;color:#d8d8d8">Select</div>
  <div class="t" style="left:180px;top:4px;color:#d8d8d8">Marker</div>
  <div class="t" style="left:214px;top:4px;color:#d8d8d8">Channel</div>
  <div class="t" style="left:253px;top:4px;color:#d8d8d8">Key</div>
  <div class="a" style="left:276px;top:3px;width:25px;height:12px;background:#454545;border-radius:3px"></div>
  <div class="a" style="left:288.5px;top:3px;width:1px;height:12px;background:#333"></div>
  <div class="a" style="left:279px;top:8.5px;width:7px;height:1.2px;background:#ddd"></div><div class="a" style="left:281.9px;top:5.5px;width:1.2px;height:7px;background:#ddd"></div>
  <div class="a" style="left:292px;top:8.5px;width:7px;height:1.2px;background:#ddd"></div>
  <div class="chev" style="left:307px;top:6px;width:4px;height:4px"></div>
  <div class="a" style="left:319px;top:3px;width:26px;height:12px;background:#454545;border-radius:3px"></div>
  <div class="a" style="left:332px;top:3px;width:1px;height:12px;background:#333"></div>
  <svg class="a" style="left:319px;top:3px" width="26" height="12" viewBox="0 0 26 12"><path d="M3 8l3.5-4 3.5 4z M16 4l3.5 4 3.5-4z" fill="#e8e8e8"/></svg>
  <div class="a" style="left:349px;top:3px;width:26px;height:12px;background:#454545;border-radius:3px"></div>
  <div class="a" style="left:362px;top:3px;width:1px;height:12px;background:#333"></div>
  <svg class="a" style="left:349px;top:3px" width="26" height="12" viewBox="0 0 26 12"><rect x="2.5" y="2.5" width="8" height="6" fill="none" stroke="#ccc" stroke-width="1"/><path d="M5 10h3" stroke="#ccc"/><rect x="16" y="5.5" width="7" height="5" fill="#ddd"/><path d="M17.5 6V4a2 2 0 0 1 4 0v2" stroke="#ddd" fill="none" stroke-width="1.1"/></svg>
  <div class="a" style="left:852px;top:3px;width:12px;height:12px;background:#4772b3;border-radius:3px 0 0 3px"></div>
  <svg class="a" style="left:852px;top:3px" width="12" height="12" viewBox="0 0 12 12"><path d="M3 2l7 3.5-3 1 2.5 3-1 1-2.5-3-2 2.5z" fill="#fff"/></svg>
  <div class="a" style="left:864px;top:3px;width:13px;height:12px;background:#454545;border-radius:0 3px 3px 0"></div>
  <svg class="a" style="left:865px;top:3px" width="12" height="12" viewBox="0 0 12 12"><rect x="2" y="2" width="8" height="8" fill="none" stroke="#ccc" stroke-dasharray="1.2 1"/><rect x="4" y="4" width="4" height="4" fill="#aaa"/></svg>
  <div class="dd" style="left:882px;top:3px;width:21px;height:12px"></div>
  <svg class="a" style="left:883px;top:3px" width="12" height="12" viewBox="0 0 12 12"><path d="M1 2h10L7 6.5V11L5 10V6.5z" fill="none" stroke="#ddd" stroke-width="1"/></svg>
  <div class="chev" style="left:897px;top:7px;width:3px;height:3px"></div>
  <div class="a" style="left:906px;top:3px;width:12px;height:12px;background:#545454;border-radius:3px 0 0 3px"></div>
  <div class="a" style="left:909px;top:6px;width:6px;height:6px;border-radius:50%;border:1px solid #bbb"></div><div class="a" style="left:911px;top:8px;width:2px;height:2px;border-radius:50%;background:#fff"></div>
  <div class="dd" style="left:918px;top:3px;width:22px;height:12px;border-radius:0 3px 3px 0;background:#2a2a2a"></div>
  <svg class="a" style="left:920px;top:3px" width="12" height="12" viewBox="0 0 12 12"><path d="M1 10C4 10 4 2 6 2s2 8 5 8" stroke="#777" fill="none"/></svg>
  <div class="chev" style="left:934px;top:7px;width:3px;height:3px;border-color:#666"></div>
  <!-- channel region -->
  <div class="dd" style="left:1px;top:19px;width:112px;height:11px;background:#1d1d1d"></div>
  <svg class="a" style="left:2px;top:19px" width="11" height="11" viewBox="0 0 11 11"><circle cx="6" cy="4.5" r="3" fill="none" stroke="#bbb" stroke-width="1"/><path d="M4 6.5L1 9.5" stroke="#bbb" stroke-width="1.2"/></svg>
  <div class="t" style="left:15px;top:20px;color:#6c6c6c">Search</div>
  <div class="a" style="left:114px;top:19px;width:14px;height:11px;background:#545454;border-radius:3px"></div>
  <svg class="a" style="left:115px;top:19px" width="12" height="11" viewBox="0 0 12 11"><path d="M1.5 5.5h9M3.5 3.5l-2 2 2 2M8.5 3.5l2 2-2 2" stroke="#ddd" stroke-width="1" fill="none"/></svg>
  <div class="chev" style="left:2px;top:35px;width:3.5px;height:3.5px"></div>
  <div class="t" style="left:10px;top:34px;color:#d8d8d8">Summary</div>
  <div class="a" style="left:760px;top:17px;width:186px;height:83px;background:#2b2b2b"></div>
</div>


<!-- layer panel (dopesheet sidebar) -->
<div class="a" style="left:764px;top:544px;width:177px;height:81px;background:#3c3c3c;border-radius:4px 4px 0 0;overflow:hidden">
  <div class="chev" style="left:6px;top:5px;width:4px;height:4px"></div>
  <div class="t" style="left:15px;top:4px;color:#e0e0e0">Layer</div>
  <svg class="a" style="left:163px;top:5px" width="10" height="4" viewBox="0 0 10 4"><g fill="#555"><rect x="0" y="0" width="1" height="1"/><rect x="2" y="0" width="1" height="1"/><rect x="4" y="0" width="1" height="1"/><rect x="6" y="0" width="1" height="1"/><rect x="0" y="2" width="1" height="1"/><rect x="2" y="2" width="1" height="1"/><rect x="4" y="2" width="1" height="1"/><rect x="6" y="2" width="1" height="1"/></g></svg>
  <div class="lbl" style="left:0;top:23px;width:69px;color:#c8c8c8">Blend</div>
  <div class="sel" style="left:76px;top:23px;width:95px;height:12px;line-height:12px">Regular</div>
  <div class="chev" style="left:164px;top:26px;width:3px;height:3px"></div>
  <div class="lbl" style="left:0;top:39.5px;width:69px;color:#c8c8c8">Opacity</div>
  <div class="fld" style="left:76px;top:39.5px;width:95px;height:12px;line-height:12px;background:#4772b3;color:#f0f0f0">1.000</div>
  <div class="cbon" style="left:76px;top:57px"></div>
  <div class="t" style="left:88px;top:56px;color:#e0e0e0">Lights</div>
  <div class="chr" style="left:15px;top:80px;width:4px;height:4px"></div>
  <div class="a" style="left:23px;top:78px;width:8px;height:8px;background:#4772b3;border-radius:2px"></div>
  <div class="t" style="left:35px;top:78px;color:#e0e0e0">Masks</div>
</div>
<div class="a" style="left:942px;top:545px;width:2px;height:26px;background:#3e3e3e;border-radius:1px"></div>

<!-- ================= TIMELINE FOOTER ================= -->
<div class="a" style="left:0;top:627px;width:946px;height:16px;background:#303030;border-radius:0 6px 6px 0;box-shadow:inset 0 1px 0 #383838">
  <div class="dd" style="left:3px;top:3px;width:20px;height:11px"></div>
  <svg class="a" style="left:5px;top:3px" width="11" height="11" viewBox="0 0 11 11"><circle cx="5.5" cy="5.5" r="4.5" fill="#ddd"/><path d="M5.5 5.5L8 2.5" stroke="#303030" stroke-width="1.5"/><path d="M5.5 5.5L2.5 5.5" stroke="#303030" stroke-width="1.2"/></svg>
  <div class="chev" style="left:17px;top:6px;width:3px;height:3px"></div>
  <div class="dd" style="left:28px;top:3px;width:45px;height:11px"></div>
  <div class="t" style="left:32px;top:3.5px;color:#e0e0e0">Playback</div>
  <div class="chev" style="left:67px;top:6px;width:3px;height:3px"></div>
  <div class="dd" style="left:75px;top:3px;width:39px;height:11px"></div>
  <div class="t" style="left:79px;top:3.5px;color:#e0e0e0">Keying</div>
  <div class="chev" style="left:108px;top:6px;width:3px;height:3px"></div>
  <div class="t" style="left:121px;top:3.5px;color:#d8d8d8">View</div>
  <div class="t" style="left:148px;top:3.5px;color:#d8d8d8">Marker</div>
  <div class="a" style="left:410px;top:3px;width:12px;height:11px;background:#454545;border-radius:3px 0 0 3px"></div>
  <div class="a" style="left:412.5px;top:5px;width:7px;height:7px;border-radius:50%;border:1px solid #aaa"></div>
  <div class="dd" style="left:422px;top:3px;width:12px;height:11px;border-radius:0 3px 3px 0;background:#2a2a2a"></div>
  <div class="chev" style="left:426px;top:6px;width:3px;height:3px;border-color:#666"></div>
  <div class="a" style="left:439px;top:3px;width:79px;height:11px;background:#454545;border-radius:3px"></div>
  <svg class="a" style="left:439px;top:3px" width="79" height="11" viewBox="0 0 79 11">
    <g fill="#eee"><rect x="4" y="2.5" width="1.2" height="6"/><path d="M11 2.5v6l-5-3z"/>
    <path d="M17 5.5l3-3v6z M24 5.5l-3-3v6z"/><path d="M35 2.5v6l-5-3z"/><path d="M43 2.5v6l5-3z"/>
    <path d="M56 5.5l3-3v6z M63 5.5l-3-3v6z"/><path d="M69 2.5v6l5-3z"/><rect x="74" y="2.5" width="1.2" height="6"/></g>
    <g fill="#333"><rect x="13" y="0" width="1" height="11"/><rect x="26" y="0" width="1" height="11"/><rect x="39" y="0" width="1" height="11"/><rect x="52" y="0" width="1" height="11"/><rect x="65" y="0" width="1" height="11"/></g>
  </svg>
  <div class="fld" style="left:757px;top:3px;width:49px;height:11px">1</div>
  <div class="a" style="left:810px;top:3px;width:13px;height:11px;background:#3d3d3d;border-radius:3px 0 0 3px"></div>
  <svg class="a" style="left:811px;top:3px" width="11" height="11" viewBox="0 0 11 11"><circle cx="5.5" cy="6" r="3.8" fill="none" stroke="#ccc" stroke-width="1"/><path d="M5.5 6V4M4 1h3" stroke="#ccc"/></svg>
  <div class="fld" style="left:823px;top:3px;width:59px;height:11px;border-radius:0"></div>
  <div class="t" style="left:833px;top:3.5px;color:#e0e0e0">Start</div>
  <div class="t" style="left:868px;top:3.5px;color:#e0e0e0">1</div>
  <div class="fld" style="left:883px;top:3px;width:57px;height:11px;border-radius:0 3px 3px 0"></div>
  <div class="t" style="left:893px;top:3.5px;color:#e0e0e0">End</div>
  <div class="t" style="left:918px;top:3.5px;color:#e0e0e0">250</div>
</div>

<!-- ================= STATUS BAR ================= -->
<div class="a" style="left:0;top:643px;width:1280px;height:12px;background:#1b1b1b">
  <svg class="a" style="left:3px;top:3px" width="9" height="10" viewBox="0 0 9 10"><rect x="1" y="1" width="6" height="8.5" rx="2.5" fill="none" stroke="#bbb" stroke-width=".9"/><rect x="1.5" y="1.5" width="2.5" height="3.5" fill="#bbb"/></svg>
  <div class="t" style="left:15px;top:4px;color:#c8c8c8">Pan</div>
  <svg class="a" style="left:34px;top:3px" width="9" height="10" viewBox="0 0 9 10"><rect x="1" y="1" width="6" height="8.5" rx="2.5" fill="none" stroke="#bbb" stroke-width=".9"/><rect x="4" y="1.5" width="2.5" height="3.5" fill="#bbb"/></svg>
  <div class="t" style="left:46px;top:4px;color:#c8c8c8">Options</div>
  <div class="t" style="left:1257px;top:4px;color:#8c8c8c">4.4.3</div>
</div>


<!-- ================= OUTLINER ================= -->
<div class="a" style="left:947px;top:1px;width:332px;height:109.5px;background:#282828;border-radius:6px;overflow:hidden">
  <div class="a" style="left:0;top:31px;width:332px;height:14px;background:#2b2b2b"></div>
  <div class="a" style="left:0;top:58px;width:332px;height:13px;background:#2b2b2b"></div>
  <div class="a" style="left:0;top:84px;width:332px;height:14px;background:#2b2b2b"></div>
</div>
<div class="dd" style="left:954px;top:3px;width:20px;height:13px;background:#252525"></div>
<svg class="a" style="left:955px;top:4px" width="13" height="11" viewBox="0 0 13 11"><rect x="1" y="0.5" width="4" height="2" fill="#ddd"/><path d="M2 2.5v7h2M2 5.5h2" stroke="#aaa" stroke-width=".8" fill="none"/><rect x="5" y="4.5" width="6" height="2" fill="#ddd"/><rect x="5" y="8" width="6" height="2" fill="#ddd"/></svg>
<div class="chev" style="left:967.5px;top:7px;width:3px;height:3px"></div>
<div class="dd" style="left:978px;top:3px;width:20px;height:13px;background:#252525"></div>
<svg class="a" style="left:979px;top:4px" width="12" height="11" viewBox="0 0 12 11"><path d="M2 4l4-3h5v5l-3 4H2z" fill="#888"/><path d="M4 9l2.5-4 2.5 4z" fill="#eee"/></svg>
<div class="chev" style="left:992px;top:7px;width:3px;height:3px"></div>
<div class="dd" style="left:1067px;top:3px;width:80px;height:13px;background:#1f1f1f;box-shadow:0 0 0 .6px #333"></div>
<svg class="a" style="left:1069px;top:4px" width="11" height="11" viewBox="0 0 11 11"><circle cx="6.5" cy="4.5" r="3" fill="none" stroke="#ccc" stroke-width="1"/><path d="M4.5 6.5L1.5 9.5" stroke="#ccc" stroke-width="1.2"/></svg>
<div class="t" style="left:1084px;top:4.5px;color:#6c6c6c">Search</div>
<div class="dd" style="left:1237px;top:3px;width:22px;height:13px;background:#252525"></div>
<svg class="a" style="left:1238px;top:4px" width="12" height="11" viewBox="0 0 12 11"><path d="M1 1h10L7 5.5V10L5 9V5.5z" fill="none" stroke="#ddd" stroke-width="1"/></svg>
<div class="chev" style="left:1252px;top:7px;width:3px;height:3px"></div>
<div class="a" style="left:1263px;top:3px;width:13px;height:13px;background:#545454;border-radius:3px"></div>
<svg class="a" style="left:1264px;top:4px" width="11" height="11" viewBox="0 0 11 11"><rect x="1.5" y="2.5" width="6" height="7" fill="none" stroke="#ccc" stroke-width="1"/><circle cx="8" cy="3" r="2" fill="#eee"/></svg>

<svg class="a" style="left:963px;top:21px" width="10" height="10" viewBox="0 0 10 10"><rect x="0.5" y="0.5" width="9" height="2.5" fill="#e6e6e6"/><rect x="1" y="3.5" width="8" height="6" fill="#e6e6e6"/><rect x="3.5" y="5" width="3" height="1" fill="#333"/></svg>
<div class="t" style="left:977px;top:21px;color:#d8d8d8">Scene Collection</div>
<div class="chev" style="left:965px;top:36.5px;width:4px;height:4px;border-color:#aaa"></div>
<div class="a" style="left:974px;top:33px;width:13px;height:13px;background:#4a4a4a;border-radius:3px"></div>
<svg class="a" style="left:975.5px;top:34.5px" width="10" height="10" viewBox="0 0 10 10"><rect x="0.5" y="0.5" width="9" height="2.5" fill="#e6e6e6"/><rect x="1" y="3.5" width="8" height="6" fill="#e6e6e6"/><rect x="3.5" y="5" width="3" height="1" fill="#333"/></svg>
<div class="t" style="left:990px;top:34.5px;color:#ffffff;text-shadow:0.3px 0 0 #fff">Collection</div>
<svg class="a" style="left:949px;top:47px" width="11" height="11" viewBox="0 0 11 11"><path d="M1 10l.6-2.6L8 1l2 2-6.4 6.4z" fill="#e0e0e0"/></svg>
<div class="a" style="left:966.5px;top:49px;width:1px;height:7px;background:#555"></div>
<div class="chr" style="left:978px;top:51px;width:4px;height:4px;border-color:#aaa"></div>
<div class="a" style="left:987px;top:46px;width:14px;height:13px;background:#4a4a4a;border-radius:3px"></div>
<svg class="a" style="left:988px;top:46px" width="12" height="12" viewBox="0 0 12 12"><path d="M2.5 11C1.5 7 4 5.5 5.5 7.5s-.5 3 1.5 3.5 3-3 .5-4 0-4.5 2.5-4M8 3l2-2" stroke="#e8954a" stroke-width="1.2" fill="none"/></svg>
<div class="t" style="left:1004px;top:48px;color:#d8d8d8">Stroke</div>
<svg class="a" style="left:1040px;top:46px" width="12" height="12" viewBox="0 0 12 12"><path d="M1.5 10c1-3 4-1 5-3s-2-3 0-4 3 1 4-1" stroke="#3ab08a" stroke-width="1.2" fill="none"/><circle cx="3" cy="10" r="1.4" fill="none" stroke="#3ab08a"/><circle cx="9.5" cy="2.5" r="1.4" fill="none" stroke="#3ab08a"/></svg>
<div class="chev" style="left:965px;top:63px;width:4px;height:4px;border-color:#aaa"></div>
<svg class="a" style="left:975.5px;top:61px" width="10" height="10" viewBox="0 0 10 10"><rect x="0.5" y="0.5" width="9" height="2.5" fill="#e6e6e6"/><rect x="1" y="3.5" width="8" height="6" fill="#e6e6e6"/><rect x="3.5" y="5" width="3" height="1" fill="#333"/></svg>
<div class="t" style="left:990px;top:61.5px;color:#d8d8d8">Camera</div>
<div class="a" style="left:966.5px;top:76px;width:1px;height:7px;background:#555"></div>
<div class="chr" style="left:978px;top:77.5px;width:4px;height:4px;border-color:#aaa"></div>
<svg class="a" style="left:988px;top:73px" width="13" height="12" viewBox="0 0 13 12"><circle cx="4" cy="3.5" r="2.3" fill="#e8954a"/><circle cx="8.5" cy="3.5" r="2.3" fill="#e8954a"/><rect x="2" y="6" width="7.5" height="4.5" fill="#e8954a"/><path d="M9.5 8l3-1.8v4l-3-1.2z" fill="#e8954a"/><circle cx="4" cy="3.5" r=".8" fill="#282828"/><circle cx="8.5" cy="3.5" r=".8" fill="#282828"/></svg>
<div class="t" style="left:1004px;top:75px;color:#d8d8d8">Camera</div>
<div class="a" style="left:1043px;top:73px;width:14px;height:13px;background:#4a4a4a;border-radius:3px"></div>
<svg class="a" style="left:1044px;top:73px" width="12" height="12" viewBox="0 0 12 12"><circle cx="5" cy="4" r="2.6" fill="none" stroke="#3ab08a" stroke-width="1.1"/><circle cx="8" cy="4" r="2" fill="none" stroke="#3ab08a" stroke-width="1.1"/><path d="M2 8h6v2.5H2zM8 9l2.5-1v3L8 10" fill="none" stroke="#3ab08a" stroke-width="1"/></svg>
<div class="a" style="left:1237px;top:35px;width:8px;height:8px;background:#e8e8e8;border-radius:1px"></div><svg class="a" style="left:1237px;top:35px" width="8" height="8" viewBox="0 0 8 8"><path d="M1.5 4l2 2 3-4.5" stroke="#222" stroke-width="1.3" fill="none"/></svg> <svg class="a" style="left:1249px;top:34.0px" width="10" height="8" viewBox="0 0 10 8"><path d="M0.7 4C2.5 1 7.5 1 9.3 4 7.5 7 2.5 7 0.7 4z" fill="none" stroke="#e0e0e0" stroke-width="1"/><circle cx="5" cy="4" r="1.5" fill="#e0e0e0"/></svg> <svg class="a" style="left:1263px;top:33.5px" width="10" height="9" viewBox="0 0 10 9"><path d="M0.5 2h2.5l1-1.5h2l1 1.5h2.5v6.5h-9z" fill="#e6e6e6"/><circle cx="5" cy="5" r="2" fill="#555"/><circle cx="5" cy="5" r="1" fill="#bbb"/></svg>
<svg class="a" style="left:1249px;top:47.5px" width="10" height="8" viewBox="0 0 10 8"><path d="M0.7 4C2.5 1 7.5 1 9.3 4 7.5 7 2.5 7 0.7 4z" fill="none" stroke="#e0e0e0" stroke-width="1"/><circle cx="5" cy="4" r="1.5" fill="#e0e0e0"/></svg> <svg class="a" style="left:1263px;top:47.0px" width="10" height="9" viewBox="0 0 10 9"><path d="M0.5 2h2.5l1-1.5h2l1 1.5h2.5v6.5h-9z" fill="#e6e6e6"/><circle cx="5" cy="5" r="2" fill="#555"/><circle cx="5" cy="5" r="1" fill="#bbb"/></svg>
<div class="a" style="left:1237px;top:62px;width:8px;height:8px;background:#e8e8e8;border-radius:1px"></div><svg class="a" style="left:1237px;top:62px" width="8" height="8" viewBox="0 0 8 8"><path d="M1.5 4l2 2 3-4.5" stroke="#222" stroke-width="1.3" fill="none"/></svg> <svg class="a" style="left:1249px;top:61.0px" width="10" height="8" viewBox="0 0 10 8"><path d="M0.7 4C2.5 1 7.5 1 9.3 4 7.5 7 2.5 7 0.7 4z" fill="none" stroke="#e0e0e0" stroke-width="1"/><circle cx="5" cy="4" r="1.5" fill="#e0e0e0"/></svg> <svg class="a" style="left:1263px;top:60.5px" width="10" height="9" viewBox="0 0 10 9"><path d="M0.5 2h2.5l1-1.5h2l1 1.5h2.5v6.5h-9z" fill="#e6e6e6"/><circle cx="5" cy="5" r="2" fill="#555"/><circle cx="5" cy="5" r="1" fill="#bbb"/></svg>
<svg class="a" style="left:1249px;top:74.5px" width="10" height="8" viewBox="0 0 10 8"><path d="M0.7 4C2.5 1 7.5 1 9.3 4 7.5 7 2.5 7 0.7 4z" fill="none" stroke="#e0e0e0" stroke-width="1"/><circle cx="5" cy="4" r="1.5" fill="#e0e0e0"/></svg> <svg class="a" style="left:1263px;top:74.0px" width="10" height="9" viewBox="0 0 10 9"><path d="M0.5 2h2.5l1-1.5h2l1 1.5h2.5v6.5h-9z" fill="#e6e6e6"/><circle cx="5" cy="5" r="2" fill="#555"/><circle cx="5" cy="5" r="1" fill="#bbb"/></svg>


<!-- ================= PROPERTIES ================= -->
<div class="a" style="left:947px;top:113px;width:332px;height:530px;background:#2e2e2e;border-radius:6px 6px 6px 6px;overflow:hidden">
  <div class="a" style="left:0;top:0;width:332px;height:18px;background:#303030"></div>
  <div class="a" style="left:0;top:17px;width:19px;height:513px;background:#1f1f1f"></div>
</div>
<div class="dd" style="left:953px;top:115px;width:21px;height:13px;background:#252525"></div>
<svg class="a" style="left:955px;top:116px" width="12" height="11" viewBox="0 0 12 11"><rect x="0.5" y="0.5" width="8" height="4" rx="2" fill="#ddd"/><rect x="0.5" y="6" width="8" height="4" rx="2" fill="#ddd"/><circle cx="6.5" cy="2.5" r="1.3" fill="#333"/><circle cx="6.5" cy="8" r="1.3" fill="#333"/></svg>
<div class="chev" style="left:968px;top:119px;width:3px;height:3px"></div>
<div class="dd" style="left:1075px;top:115px;width:78px;height:13px;background:#1f1f1f"></div>
<svg class="a" style="left:1078px;top:116px" width="11" height="11" viewBox="0 0 11 11"><circle cx="6.5" cy="4.5" r="3" fill="none" stroke="#ccc" stroke-width="1"/><path d="M4.5 6.5L1.5 9.5" stroke="#ccc" stroke-width="1.2"/></svg>
<div class="t" style="left:1092px;top:116.5px;color:#6c6c6c">Search</div>
<div class="dd" style="left:1263px;top:115px;width:12px;height:12px;background:#252525"></div>
<div class="chev" style="left:1267.5px;top:118.5px;width:3.5px;height:3.5px"></div>

<svg class="a" style="left:950px;top:137px" width="14" height="300" viewBox="0 0 14 300">
  <!-- tool 144 -->
  <path d="M4 2v6M10 2l-2 3v7M10 2l2 3" stroke="#ddd" stroke-width="1.3" fill="none"/><circle cx="4" cy="10" r="2" fill="#ddd"/>
  <!-- render 168 -->
  <rect x="2" y="29" width="10" height="7" fill="none" stroke="#ddd" stroke-width="1.2"/><path d="M3 28h3l1-2M8 28h3" stroke="#ddd"/>
  <!-- output 188 -->
  <rect x="2" y="46" width="10" height="3" fill="#ddd"/><rect x="3" y="50" width="8" height="5" fill="none" stroke="#ddd" stroke-width="1.1"/>
  <!-- view layer 205 -->
  <rect x="2" y="66" width="8" height="7" fill="#888"/><rect x="4" y="64" width="8" height="7" fill="#ddd"/><path d="M5 70l2-3 3 3z" fill="#333"/>
  <!-- scene 224 -->
  <path d="M2 92l3-6 3 6z" fill="#ddd"/><circle cx="9.5" cy="90" r="2.3" fill="none" stroke="#ddd" stroke-width="1.1"/><circle cx="10" cy="85" r="1" fill="#ddd"/>
  <!-- world 244 -->
  <circle cx="7" cy="107" r="4.5" fill="none" stroke="#d85858" stroke-width="1.4"/><path d="M4 104l3 2-1 3 3 1 1 2" stroke="#d85858" stroke-width="1.2" fill="none"/>
  <!-- collection 265 -->
  <rect x="2" y="125.5" width="10" height="2.5" fill="#ddd"/><rect x="2.5" y="128.5" width="9" height="6" fill="none" stroke="#ddd" stroke-width="1.1"/>
  <!-- object 292 -->
  <rect x="3" y="151" width="8" height="8" fill="none" stroke="#e8954a" stroke-width="1.4"/><rect x="5" y="153" width="4" height="4" fill="#e8954a"/>
  <!-- modifiers 310 -->
  <path d="M3 179l5-5M7 171a3 3 0 1 0 4 4l-2-.5-.8-2.3z" stroke="#6a9be0" stroke-width="1.6" fill="#6a9be0"/>
  <!-- fx 329 -->
  <path d="M3 198l6-6" stroke="#6a9be0" stroke-width="1.5"/><path d="M10 190v3M8.5 191.5h3M5 190v2M4 191h2M10 195v2M9 196h2" stroke="#6a9be0" stroke-width=".9"/>
  <!-- physics 347 -->
  <circle cx="7.5" cy="210" r="4.5" fill="none" stroke="#6a9be0" stroke-width="1.2" stroke-dasharray="20 5"/><circle cx="7.5" cy="210" r="2" fill="#6a9be0"/>
  <!-- constraints 366 -->
  <circle cx="5" cy="231" r="3" fill="none" stroke="#6a9be0" stroke-width="1.5"/><circle cx="9" cy="227" r="3" fill="none" stroke="#6a9be0" stroke-width="1.5"/>
  <!-- data 385 -->
  <path d="M2.5 252c1-3 4-1 5-3s-2-3 0-4 3 1 4-1" stroke="#3ab08a" stroke-width="1.3" fill="none"/><circle cx="3.5" cy="252" r="1.5" fill="none" stroke="#3ab08a"/>
</svg>
<div class="a" style="left:949px;top:395px;width:17px;height:19px;background:#3d3d3d;border-radius:4px 0 0 4px"></div>
<svg class="a" style="left:951px;top:398px" width="12" height="12" viewBox="0 0 12 12"><circle cx="6" cy="6" r="5" fill="#d85858"/><path d="M6 1v5l4 2.5" stroke="#eee" stroke-width="1.2" fill="none"/><path d="M6 6L2 9" stroke="#3d3d3d" stroke-width="1.2"/></svg>
<svg class="a" style="left:951px;top:422px" width="12" height="12" viewBox="0 0 12 12"><rect x="1" y="1" width="10" height="10" fill="#d85858"/><g fill="#602a2a"><rect x="1" y="1" width="2" height="2"/><rect x="5" y="1" width="2" height="2"/><rect x="9" y="1" width="2" height="2"/><rect x="3" y="3" width="2" height="2"/><rect x="7" y="3" width="2" height="2"/><rect x="1" y="5" width="2" height="2"/><rect x="5" y="5" width="2" height="2"/><rect x="9" y="5" width="2" height="2"/><rect x="3" y="7" width="2" height="2"/><rect x="7" y="7" width="2" height="2"/><rect x="1" y="9" width="2" height="2"/><rect x="5" y="9" width="2" height="2"/><rect x="9" y="9" width="2" height="2"/></g></svg>


<!-- material list -->
<div class="a" style="left:972px;top:139px;width:284px;height:105px;background:#242424;border-radius:3px"></div>
<div class="a" style="left:980px;top:142px;width:10px;height:10px;border-radius:50%;background:#1a1a1a;border:1px solid #111"></div>
<div class="t" style="left:997px;top:143px;color:#d8d8d8">Solid Stroke</div>
<div class="a" style="left:975px;top:155px;width:277px;height:12px;background:#4772b3;border-radius:3px"></div>
<div class="a" style="left:980px;top:156px;width:10px;height:10px;border-radius:50%;background:#2f5b99"></div>
<div class="t" style="left:997px;top:156.5px;color:#fff">Material</div>
<svg class="a" style="left:1210px;top:141px" width="42" height="26" viewBox="0 0 42 26">
  <g><circle cx="5" cy="7" r="3" fill="none" stroke="#aaa" stroke-width=".9"/><circle cx="7.5" cy="5" r="3" fill="#eee"/><circle cx="7.5" cy="5" r="1.3" fill="#242424"/>
  <path d="M15.5 6C17 3.5 21 3.5 22.5 6 21 8.5 17 8.5 15.5 6z" fill="none" stroke="#e0e0e0" stroke-width="1"/><circle cx="19" cy="6" r="1.3" fill="#e0e0e0"/>
  <path d="M28 5V3.5a2 2 0 0 1 4 0" stroke="#ccc" fill="none" stroke-width=".9"/><rect x="30" y="5" width="5" height="4" fill="none" stroke="#ccc" stroke-width=".9"/></g>
  <g transform="translate(0,14)"><circle cx="5" cy="7" r="3" fill="none" stroke="#aac" stroke-width=".9"/><circle cx="7.5" cy="5" r="3" fill="#eee"/><circle cx="7.5" cy="5" r="1.3" fill="#4772b3"/>
  <path d="M15.5 6C17 3.5 21 3.5 22.5 6 21 8.5 17 8.5 15.5 6z" fill="none" stroke="#e0e0e0" stroke-width="1"/><circle cx="19" cy="6" r="1.3" fill="#e0e0e0"/>
  <path d="M28 5V3.5a2 2 0 0 1 4 0" stroke="#ccc" fill="none" stroke-width=".9"/><rect x="30" y="5" width="5" height="4" fill="none" stroke="#ccc" stroke-width=".9"/></g>
</svg>
<svg class="a" style="left:979px;top:235px" width="6" height="6" viewBox="0 0 6 6"><path d="M1 1l4 2-4 2z" fill="#ccc"/></svg>
<svg class="a" style="left:1116px;top:237px" width="9" height="4" viewBox="0 0 9 4"><g fill="#585858"><rect x="0" y="0" width="1" height="1"/><rect x="2" y="0" width="1" height="1"/><rect x="4" y="0" width="1" height="1"/><rect x="6" y="0" width="1" height="1"/><rect x="8" y="0" width="1" height="1"/><rect x="0" y="2" width="1" height="1"/><rect x="2" y="2" width="1" height="1"/><rect x="4" y="2" width="1" height="1"/><rect x="6" y="2" width="1" height="1"/><rect x="8" y="2" width="1" height="1"/></g></svg>
<div class="a" style="left:1262px;top:139px;width:13px;height:25px;background:#3d3d3d;border-radius:3px"></div>
<div class="a" style="left:1262px;top:151px;width:13px;height:1px;background:#2a2a2a"></div>
<div class="a" style="left:1265px;top:144.5px;width:7px;height:1.2px;background:#ddd"></div><div class="a" style="left:1267.9px;top:141.5px;width:1.2px;height:7px;background:#ddd"></div>
<div class="a" style="left:1265px;top:157.5px;width:7px;height:1.2px;background:#ddd"></div>
<div class="dd" style="left:1262px;top:169px;width:13px;height:12px;background:#252525"></div>
<div class="chev" style="left:1266.5px;top:172px;width:4px;height:4px"></div>
<div class="a" style="left:1262px;top:186px;width:13px;height:25px;background:#3d3d3d;border-radius:3px"></div>
<svg class="a" style="left:1262px;top:186px" width="13" height="25" viewBox="0 0 13 25"><path d="M3.5 8l3-3.5 3 3.5z M3.5 17l3 3.5 3-3.5z" fill="#eee"/><rect x="0" y="12" width="13" height="1" fill="#2a2a2a"/></svg>
<div class="a" style="left:1262px;top:216px;width:13px;height:25px;background:#3d3d3d;border-radius:3px"></div>
<svg class="a" style="left:1262px;top:216px" width="13" height="25" viewBox="0 0 13 25"><rect x="3" y="3" width="7" height="5" fill="none" stroke="#ccc" stroke-width=".9"/><path d="M5 9.5h3" stroke="#ccc"/><rect x="0" y="12" width="13" height="1" fill="#2a2a2a"/><rect x="3.5" y="17" width="6" height="4.5" fill="#ddd"/><path d="M4.5 17.5V16a2 2 0 0 1 4 0v1.5" stroke="#ddd" fill="none"/></svg>
<div class="a" style="left:1276px;top:150px;width:2px;height:480px;background:#3a3a3a;border-radius:1px"></div>

<!-- material slot field -->
<div class="a" style="left:972px;top:249px;width:24px;height:12px;background:#2a2a2a;border-radius:3px 0 0 3px"></div>
<div class="a" style="left:979.5px;top:251px;width:8px;height:8px;border-radius:50%;background:#2f5ea8"></div>
<div class="a" style="left:993px;top:249px;width:215px;height:12px;background:#1d1d1d"></div>
<div class="t" style="left:997px;top:250px;color:#e8e8e8">Material</div>
<div class="a" style="left:1208px;top:249px;width:40px;height:12px;background:#545454;border-radius:0 3px 3px 0"></div>
<svg class="a" style="left:1208px;top:249px" width="40" height="12" viewBox="0 0 40 12"><path d="M7 2l4 1.3v3c0 2.5-2 3.8-4 4.7-2-.9-4-2.2-4-4.7v-3z" fill="none" stroke="#ccc" stroke-width=".9"/><rect x="13.3" y="0" width=".8" height="12" fill="#444"/><rect x="17" y="4" width="5" height="6" fill="none" stroke="#ddd" stroke-width=".9"/><rect x="19" y="2" width="5" height="6" fill="none" stroke="#ddd" stroke-width=".9"/><rect x="26.6" y="0" width=".8" height="12" fill="#444"/><path d="M30.5 3.5l5 5M35.5 3.5l-5 5" stroke="#ddd" stroke-width="1"/></svg>
<div class="dd" style="left:1255px;top:248px;width:20px;height:13px;background:#2a2a2a"></div>
<svg class="a" style="left:1256px;top:249px" width="11" height="11" viewBox="0 0 11 11"><path d="M2 2h7L5.5 9z" fill="none" stroke="#ddd" stroke-width="1"/><circle cx="2" cy="2" r="1.3" fill="#ddd"/><circle cx="9" cy="2" r="1.3" fill="#ddd"/><circle cx="5.5" cy="9" r="1.3" fill="#ddd"/></svg>
<div class="chev" style="left:1268.5px;top:252px;width:3px;height:3px"></div>

<!-- panels -->
<div class="ph" style="left:972px;top:268px;width:303px;height:16px"></div>
<div class="chr" style="left:978px;top:274px;width:4px;height:4px"></div>
<div class="t" style="left:986px;top:272px;color:#e0e0e0">Preview</div>
<svg class="a" style="left:1264px;top:275px" width="9" height="4" viewBox="0 0 9 4"><g fill="#585858"><rect x="0" y="0" width="1" height="1"/><rect x="2" y="0" width="1" height="1"/><rect x="4" y="0" width="1" height="1"/><rect x="6" y="0" width="1" height="1"/><rect x="8" y="0" width="1" height="1"/><rect x="0" y="2" width="1" height="1"/><rect x="2" y="2" width="1" height="1"/><rect x="4" y="2" width="1" height="1"/><rect x="6" y="2" width="1" height="1"/><rect x="8" y="2" width="1" height="1"/></g></svg>
<div class="ph" style="left:972px;top:286px;width:303px;height:303px;background:#3c3c3c"></div>
<div class="chev" style="left:978px;top:292px;width:4px;height:4px"></div>
<div class="t" style="left:986px;top:290px;color:#e0e0e0">Surface</div>
<svg class="a" style="left:1245px;top:290px" width="10" height="10" viewBox="0 0 10 10"><g fill="#ddd"><circle cx="1.5" cy="1.5" r="1"/><circle cx="1.5" cy="5" r="1"/><circle cx="1.5" cy="8.5" r="1"/><rect x="4" y="1" width="6" height="1"/><rect x="4" y="4.5" width="6" height="1"/><rect x="4" y="8" width="6" height="1"/></g></svg>
<svg class="a" style="left:1264px;top:293px" width="9" height="4" viewBox="0 0 9 4"><g fill="#585858"><rect x="0" y="0" width="1" height="1"/><rect x="2" y="0" width="1" height="1"/><rect x="4" y="0" width="1" height="1"/><rect x="6" y="0" width="1" height="1"/><rect x="8" y="0" width="1" height="1"/><rect x="0" y="2" width="1" height="1"/><rect x="2" y="2" width="1" height="1"/><rect x="4" y="2" width="1" height="1"/><rect x="6" y="2" width="1" height="1"/><rect x="8" y="2" width="1" height="1"/></g></svg>
<div class="a" style="left:972px;top:303px;width:303px;height:17px;background:#3c3c3c"></div>
<div class="a" style="left:972px;top:320px;width:303px;height:83px;background:#363636"></div>
<div class="chev" style="left:989px;top:309px;width:4px;height:4px"></div>
<div class="cb" style="left:995px;top:308px"></div>
<div class="t" style="left:1005px;top:307px;color:#e0e0e0">Stroke</div>
<div class="lbl" style="left:965.5px;top:326.5px;width:120px">Line Type</div><div class="sel" style="left:1093px;top:326px;width:163px;height:12px;line-height:12px">Line</div><div class="chev" style="left:1250.5px;top:329px;width:3px;height:3px"></div><div class="dot" style="left:1262px;top:330.5px"></div>
<div class="lbl" style="left:965.5px;top:341.0px;width:120px">Style</div><div class="sel" style="left:1093px;top:340.5px;width:163px;height:12px;line-height:12px">Solid</div><div class="chev" style="left:1250.5px;top:343.5px;width:3px;height:3px"></div><div class="dot" style="left:1262px;top:345.0px"></div>
<div class="lbl" style="left:965.5px;top:356.0px;width:120px">Base Color</div><div class="a" style="left:1093px;top:355.5px;width:163px;height:12px;background:#000;border-radius:3px"></div><div class="dot" style="left:1262px;top:360.0px"></div>
<div class="cb" style="left:1093px;top:372px"></div><div class="t" style="left:1104px;top:371px;color:#e0e0e0">Holdout</div><div class="dot" style="left:1262px;top:374.5px"></div>
<div class="cb" style="left:1093px;top:386.5px"></div><div class="t" style="left:1104px;top:385.5px;color:#e0e0e0">Self Overlap</div><div class="dot" style="left:1262px;top:389.0px"></div>
<div class="a" style="left:972px;top:403px;width:303px;height:16px;background:#3c3c3c"></div>
<div class="a" style="left:972px;top:419px;width:303px;height:170px;background:#363636;border-radius:0 0 4px 4px"></div>
<div class="chev" style="left:989px;top:408px;width:4px;height:4px"></div>
<div class="cbon" style="left:995px;top:407.5px"></div>
<div class="t" style="left:1005px;top:406.5px;color:#e0e0e0">Fill</div>
<div class="lbl" style="left:965.5px;top:426.0px;width:120px">Style</div><div class="sel" style="left:1093px;top:425.5px;width:163px;height:12px;line-height:12px">Texture</div><div class="chev" style="left:1250.5px;top:428.5px;width:3px;height:3px"></div><div class="dot" style="left:1262px;top:430.0px"></div>
<div class="lbl" style="left:965.5px;top:440.5px;width:120px">Base Color</div><div class="a" style="left:1093px;top:440px;width:163px;height:12px;background:#7676fe;border-radius:3px"></div><div class="dot" style="left:1262px;top:444.5px"></div>
<div class="cb" style="left:1093px;top:457px"></div><div class="t" style="left:1104px;top:455.5px;color:#e0e0e0">Holdout</div><div class="dot" style="left:1262px;top:459.0px"></div>
<div class="a" style="left:979px;top:470px;width:19px;height:12px;background:#2a2a2a;border-radius:3px 0 0 3px"></div>
<svg class="a" style="left:980px;top:471px" width="17" height="10" viewBox="0 0 17 10"><rect x="1" y="1" width="8" height="8" fill="none" stroke="#ddd" stroke-width="1"/><path d="M2 8l3-4 3 4z" fill="#ddd"/><circle cx="7" cy="3" r="1" fill="#ddd"/><path d="M11 4l2 2 2-2" stroke="#ccc" fill="none"/></svg>
<div class="a" style="left:998px;top:470px;width:178px;height:12px;background:#1d1d1d"></div>
<div class="t" style="left:1003px;top:471px;color:#e8e8e8">Name.png</div>
<div class="a" style="left:1176px;top:470px;width:94px;height:12px;background:#545454;border-radius:0 3px 3px 0"></div>
<div class="t" style="left:1176px;top:471px;width:53px;text-align:center;color:#e8e8e8">2</div>
<svg class="a" style="left:1229px;top:470px" width="41" height="12" viewBox="0 0 41 12"><rect x="0" y="0" width=".8" height="12" fill="#444"/><path d="M7 2l4 1.3v3c0 2.5-2 3.8-4 4.7-2-.9-4-2.2-4-4.7v-3z" fill="none" stroke="#bbb" stroke-width=".9"/><rect x="14" y="0" width=".8" height="12" fill="#444"/><path d="M17 3h3l1 1h4v6h-8z" fill="#eee"/><rect x="28" y="0" width=".8" height="12" fill="#444"/><path d="M31.5 3.5l5 5M36.5 3.5l-5 5" stroke="#ddd" stroke-width="1"/></svg>
<div class="lbl" style="left:965.5px;top:485.0px;width:120px">Blend</div><div class="fld" style="left:1093px;top:484.5px;width:163px;height:12px;line-height:12px;border-radius:3px">0.000</div><div class="dot" style="left:1262px;top:489.0px"></div>
<div class="lbl" style="left:965.5px;top:499.5px;width:120px">Location X</div><div class="fld" style="left:1093px;top:499px;width:163px;height:12px;line-height:12px;border-radius:3px 3px 0 0">-0.300</div><div class="dot" style="left:1262px;top:503.5px"></div>
<div class="lbl" style="left:965.5px;top:512.5px;width:120px">Y</div><div class="fld" style="left:1093px;top:512.5px;width:163px;height:12px;line-height:12px;border-radius:0 0 3px 3px">-1.200</div><div class="dot" style="left:1262px;top:516.5px"></div>
<div class="a" style="left:1093px;top:511.5px;width:163px;height:1px;background:#3a3a3a"></div>
<div class="lbl" style="left:965.5px;top:527.5px;width:120px">Rotation</div><div class="fld" style="left:1093px;top:527px;width:163px;height:12px;line-height:12px;border-radius:3px">0°</div><div class="dot" style="left:1262px;top:531.5px"></div>
<div class="lbl" style="left:965.5px;top:542.5px;width:120px">Scale X</div><div class="fld" style="left:1093px;top:542px;width:163px;height:12px;line-height:12px;border-radius:3px 3px 0 0">9.000</div><div class="dot" style="left:1262px;top:546.5px"></div>
<div class="lbl" style="left:965.5px;top:555.5px;width:120px">Y</div><div class="fld" style="left:1093px;top:555.5px;width:163px;height:12px;line-height:12px;border-radius:0 0 3px 3px">5.000</div><div class="dot" style="left:1262px;top:559.5px"></div>
<div class="a" style="left:1093px;top:554.5px;width:163px;height:1px;background:#3a3a3a"></div>
<div class="cbon" style="left:1093px;top:572px"></div><div class="t" style="left:1104px;top:571px;color:#e0e0e0">Clip Image</div><div class="dot" style="left:1262px;top:574.5px"></div>

<div class="ph" style="left:972px;top:590px;width:303px;height:16.5px"></div>
<div class="chr" style="left:978px;top:596px;width:4px;height:4px"></div>
<div class="t" style="left:986px;top:593px;color:#e0e0e0">Settings</div>
<svg class="a" style="left:1264px;top:596px" width="9" height="4" viewBox="0 0 9 4"><g fill="#585858"><rect x="0" y="0" width="1" height="1"/><rect x="2" y="0" width="1" height="1"/><rect x="4" y="0" width="1" height="1"/><rect x="6" y="0" width="1" height="1"/><rect x="8" y="0" width="1" height="1"/><rect x="0" y="2" width="1" height="1"/><rect x="2" y="2" width="1" height="1"/><rect x="4" y="2" width="1" height="1"/><rect x="6" y="2" width="1" height="1"/><rect x="8" y="2" width="1" height="1"/></g></svg>
<div class="ph" style="left:972px;top:608px;width:303px;height:16px"></div>
<div class="chr" style="left:978px;top:614px;width:4px;height:4px"></div>
<div class="t" style="left:986px;top:611px;color:#e0e0e0">Animation</div>
<svg class="a" style="left:1264px;top:614px" width="9" height="4" viewBox="0 0 9 4"><g fill="#585858"><rect x="0" y="0" width="1" height="1"/><rect x="2" y="0" width="1" height="1"/><rect x="4" y="0" width="1" height="1"/><rect x="6" y="0" width="1" height="1"/><rect x="8" y="0" width="1" height="1"/><rect x="0" y="2" width="1" height="1"/><rect x="2" y="2" width="1" height="1"/><rect x="4" y="2" width="1" height="1"/><rect x="6" y="2" width="1" height="1"/><rect x="8" y="2" width="1" height="1"/></g></svg>
<div class="ph" style="left:972px;top:626px;width:303px;height:16px"></div>
<div class="chr" style="left:978px;top:632px;width:4px;height:4px"></div>
<div class="t" style="left:986px;top:629px;color:#e0e0e0">Custom Properties</div>
<svg class="a" style="left:1264px;top:632px" width="9" height="4" viewBox="0 0 9 4"><g fill="#585858"><rect x="0" y="0" width="1" height="1"/><rect x="2" y="0" width="1" height="1"/><rect x="4" y="0" width="1" height="1"/><rect x="6" y="0" width="1" height="1"/><rect x="8" y="0" width="1" height="1"/><rect x="0" y="2" width="1" height="1"/><rect x="2" y="2" width="1" height="1"/><rect x="4" y="2" width="1" height="1"/><rect x="6" y="2" width="1" height="1"/><rect x="8" y="2" width="1" height="1"/></g></svg>

</body></html>
